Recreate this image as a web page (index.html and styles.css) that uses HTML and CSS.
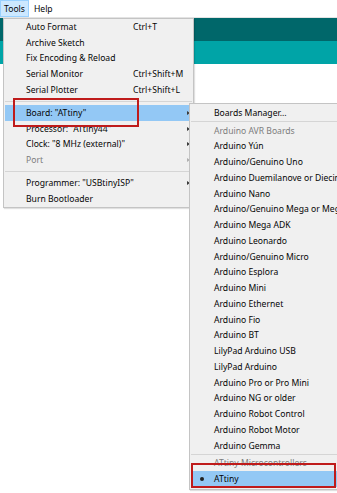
FILE: index.html
```html
<!DOCTYPE html>
<html>
<head>
<meta charset="utf-8">
<link rel="stylesheet" href="styles.css">
</head>
<body>
<div class="app">
  <div class="menubar">
    <span class="mb-item active">Tools</span>
    <span class="mb-item">Help</span>
  </div>
  <div class="toolbar"></div>
  <div class="tabs"></div>
  <div class="editor"></div>
</div>

<div class="menu main-menu">
  <div class="item"><span class="label">Auto Format</span><span class="key">Ctrl+T</span></div>
  <div class="item"><span class="label">Archive Sketch</span></div>
  <div class="item"><span class="label">Fix Encoding &amp; Reload</span></div>
  <div class="item"><span class="label">Serial Monitor</span><span class="key">Ctrl+Shift+M</span></div>
  <div class="item"><span class="label">Serial Plotter</span><span class="key">Ctrl+Shift+L</span></div>
  <div class="sep"></div>
  <div class="item hl"><span class="label">Board: "ATtiny"</span><span class="arrow"></span></div>
  <div class="item"><span class="label">Processor: "ATtiny44"</span><span class="arrow"></span></div>
  <div class="item"><span class="label">Clock: "8 MHz (external)"</span><span class="arrow"></span></div>
  <div class="item dis"><span class="label">Port</span><span class="arrow"></span></div>
  <div class="sep"></div>
  <div class="item"><span class="label">Programmer: "USBtinyISP"</span><span class="arrow"></span></div>
  <div class="item"><span class="label">Burn Bootloader</span></div>
</div>

<div class="menu sub-menu">
  <div class="item">Boards Manager...</div>
  <div class="sep sep-thin"></div>
  <div class="item dis">Arduino AVR Boards</div>
  <div class="item">Arduino Yún</div>
  <div class="item">Arduino/Genuino Uno</div>
  <div class="item">Arduino Duemilanove or Diecimila</div>
  <div class="item">Arduino Nano</div>
  <div class="item">Arduino/Genuino Mega or Mega 2560</div>
  <div class="item">Arduino Mega ADK</div>
  <div class="item">Arduino Leonardo</div>
  <div class="item">Arduino/Genuino Micro</div>
  <div class="item">Arduino Esplora</div>
  <div class="item">Arduino Mini</div>
  <div class="item">Arduino Ethernet</div>
  <div class="item">Arduino Fio</div>
  <div class="item">Arduino BT</div>
  <div class="item">LilyPad Arduino USB</div>
  <div class="item">LilyPad Arduino</div>
  <div class="item">Arduino Pro or Pro Mini</div>
  <div class="item">Arduino NG or older</div>
  <div class="item">Arduino Robot Control</div>
  <div class="item">Arduino Robot Motor</div>
  <div class="item">Arduino Gemma</div>
  <div class="sep sep-thin"></div>
  <div class="item dis">ATtiny Microcontrollers</div>
  <div class="item hl"><span class="bullet"></span>ATtiny</div>
</div>

<div class="callout callout-board"></div>
<div class="callout callout-attiny"></div>
</body>
</html>
```

FILE: styles.css
```css
html, body {
  margin: 0;
  padding: 0;
  background: #ffffff;
  overflow: hidden;
  width: 337px;
  height: 493px;
}

body {
  position: relative;
  font-family: "Noto Sans", "Open Sans", sans-serif;
  font-size: 8.6px;
  color: #050505;
}

.app {
  display: flex;
  flex-direction: column;
  height: 493px;
}

.menubar {
  height: 17px;
  display: flex;
  align-items: stretch;
  background: #ffffff;
  border-bottom: 1px solid #e3e3e3;
}

.mb-item {
  display: flex;
  align-items: center;
  padding: 0 3px;
  margin-left: 1px;
  border: 1px solid transparent;
}

.mb-item.active {
  margin-left: 0;
  background: #cce8ff;
  border-color: #99d1ff;
}

.toolbar {
  height: 23px;
  background: #00676a;
}

.tabs {
  height: 23px;
  background: #00a4a7;
}

.editor {
  flex: 1;
  background: #ffffff;
}

.menu {
  position: absolute;
  background: #f0f0f0;
  border: 1px solid #c4c4c4;
  box-shadow: 1px 1px 1px rgba(0, 0, 0, 0.12);
}

.main-menu {
  left: 3px;
  top: 18px;
  width: 189px;
}

.sub-menu {
  left: 189px;
  top: 103px;
  width: 200px;
  padding-top: 1px;
  padding-bottom: 2px;
}

.item {
  height: 15.75px;
  display: flex;
  align-items: center;
  white-space: nowrap;
  overflow: hidden;
  position: relative;
}

.main-menu .item {
  padding-left: 22px;
  padding-right: 3px;
}

.sub-menu .item {
  padding-left: 24px;
}

.label {
  flex: 0 0 107px;
  white-space: nowrap;
}

.key {
  flex: 1;
}

.arrow {
  margin-left: auto;
  width: 0;
  height: 0;
  border-top: 2px solid transparent;
  border-bottom: 2px solid transparent;
  border-left: 3px solid #3c3c3c;
}

.item.hl {
  background: #93c8f5;
  margin: 0 1px;
}

.main-menu .item.hl {
  padding-left: 21px;
  padding-right: 2px;
}

.sub-menu .item.hl {
  padding-left: 23px;
}

.item.dis {
  color: #7d7d7d;
}

.item.dis .arrow {
  border-left-color: #b0b0b0;
}

.sep {
  height: 7.25px;
  display: flex;
  align-items: center;
  margin: 0 1px;
}

.sep::before {
  content: "";
  flex: 1;
  height: 1px;
  background: #d5d5d5;
}

.sep.sep-thin {
  height: 2px;
}

.bullet {
  position: absolute;
  left: 9px;
  top: 6px;
  width: 4px;
  height: 4px;
  border-radius: 50%;
  background: #222;
}

.callout {
  position: absolute;
  border: 2px solid #bf1b1b;
  box-sizing: border-box;
}

.callout-board {
  left: 13px;
  top: 98px;
  width: 126px;
  height: 29px;
}

.callout-attiny {
  left: 191px;
  top: 463px;
  width: 145px;
  height: 25px;
}
```
